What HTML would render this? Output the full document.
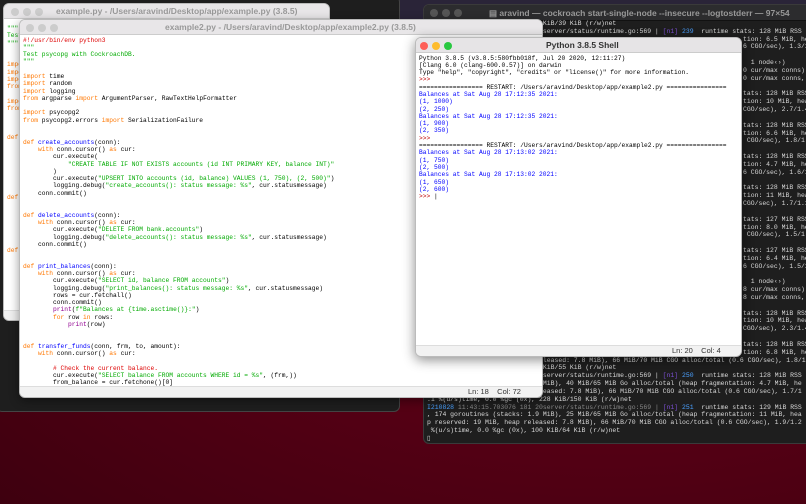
<!DOCTYPE html>
<html><head><meta charset="utf-8"><style>
*{margin:0;padding:0;box-sizing:border-box}
html,body{width:806px;height:504px;overflow:hidden}
body{position:relative;background:radial-gradient(ellipse at 75% 20%,#7c0420 0%,#5c0016 45%,#3e000f 100%);font-family:"Liberation Mono",monospace}
.abs{position:absolute}
.win{position:absolute;border-radius:6px;overflow:hidden}
.mono{font-family:"Liberation Mono",monospace}
.mono div{white-space:pre}
.k{color:#ff7700}.s{color:#00aa00}.f{color:#0000ff}.c{color:#dd0000}.b{color:#900090}
.tl{position:absolute;width:8px;height:8px;border-radius:50%}
.title{position:absolute;font-family:"Liberation Sans",sans-serif;font-size:8.5px;white-space:nowrap}
.code div{height:7.3px;line-height:7.3px}
.term div{height:7.84px;line-height:7.84px}
.term div.r{padding-left:316px}
</style></head><body>
<div class="abs" style="left:0;top:0;width:806px;height:30px;background:#2a2438"></div>
<div class="win" style="left:-4px;top:-4px;width:404px;height:416px;background:#1e1e1e;border:1px solid #444"></div>

<div class="win" style="left:423px;top:4px;width:390px;height:440px;background:#1e1e1e;border:1px solid #3a3a3a">
 <div class="abs" style="left:0;top:0;width:100%;height:16px;background:#2c2c2e;border-bottom:1px solid #111"></div>
 <div class="tl" style="left:6px;top:4px;background:#555"></div>
 <div class="tl" style="left:18px;top:4px;background:#555"></div>
 <div class="tl" style="left:30px;top:4px;background:#555"></div>
 <div class="title" style="left:65px;top:3px;color:#999;font-weight:bold">▤ aravind — cockroach start-single-node --insecure --logtostderr — 97×54</div>
</div>
<div class="abs mono term" style="left:427px;top:20px;font-size:6.45px;color:#d8d8d8"><div>                              KiB/39 KiB (r/w)net</div><div>                              server/status/runtime.go:569 | <span style="color:#7a4fd0">[n1]</span> <span style="color:#4aa0ff">239</span>  runtime stats: 128 MiB RSS</div><div class="r">tion: 6.5 MiB, he</div><div class="r">6 CGO/sec), 1.3/1</div><div> </div><div class="r">  1 node‹›)</div><div class="r">0 cur/max conns)</div><div class="r">0 cur/max conns,</div><div> </div><div class="r">tats: 128 MiB RSS</div><div class="r">tion: 10 MiB, hea</div><div class="r">CGO/sec), 2.7/1.4</div><div> </div><div class="r">tats: 128 MiB RSS</div><div class="r">tion: 6.6 MiB, he</div><div class="r"> CGO/sec), 1.8/1.</div><div> </div><div class="r">tats: 128 MiB RSS</div><div class="r">tion: 4.7 MiB, he</div><div class="r">6 CGO/sec), 1.6/1</div><div> </div><div class="r">tats: 128 MiB RSS</div><div class="r">tion: 11 MiB, hea</div><div class="r">CGO/sec), 1.7/1.1</div><div> </div><div class="r">tats: 127 MiB RSS</div><div class="r">tion: 8.0 MiB, he</div><div class="r"> CGO/sec), 1.5/1.</div><div> </div><div class="r">tats: 127 MiB RSS</div><div class="r">tion: 6.4 MiB, he</div><div class="r">6 CGO/sec), 1.5/1</div><div> </div><div class="r">  1 node‹›)</div><div class="r">8 cur/max conns)</div><div class="r">8 cur/max conns,</div><div> </div><div class="r">tats: 128 MiB RSS</div><div class="r">tion: 10 MiB, hea</div><div class="r">CGO/sec), 2.3/1.4</div><div> </div><div class="r">tats: 128 MiB RSS</div><div class="r">tion: 6.8 MiB, he</div><div>                              leased: 7.8 MiB), 66 MiB/70 MiB CGO alloc/total (0.6 CGO/sec), 1.8/1.</div><div>                              KiB/55 KiB (r/w)net</div><div>                              server/status/runtime.go:569 | <span style="color:#7a4fd0">[n1]</span> <span style="color:#4aa0ff">250</span>  runtime stats: 128 MiB RSS</div><div>                              MiB), 40 MiB/65 MiB Go alloc/total (heap fragmentation: 4.7 MiB, he</div><div>                              eased: 7.8 MiB), 66 MiB/70 MiB CGO alloc/total (0.6 CGO/sec), 1.7/1</div><div>.1 %(u/s)time, 0.0 %gc (0x), 228 KiB/150 KiB (r/w)net</div><div><span style="color:#4aa0ff">I210828</span> <span style="color:#888">11:43:15.703076 181 20server/status/runtime.go:569 |</span> <span style="color:#7a4fd0">[n1]</span> <span style="color:#4aa0ff">251</span>  runtime stats: 129 MiB RSS</div><div>, 174 goroutines (stacks: 1.9 MiB), 25 MiB/65 MiB Go alloc/total (heap fragmentation: 11 MiB, hea</div><div>p reserved: 19 MiB, heap released: 7.8 MiB), 66 MiB/70 MiB CGO alloc/total (0.6 CGO/sec), 1.9/1.2</div><div> %(u/s)time, 0.0 %gc (0x), 100 KiB/64 KiB (r/w)net</div><div>▯</div></div>

<div class="win" style="left:3px;top:3px;width:327px;height:318px;background:#fff;border:1px solid #bbb">
 <div class="abs" style="left:0;top:0;width:100%;height:15px;background:#e8e6e8;border-bottom:1px solid #ccc"></div>
 <div class="tl" style="left:7px;top:3.5px;background:#ccc"></div>
 <div class="tl" style="left:19px;top:3.5px;background:#ccc"></div>
 <div class="tl" style="left:31px;top:3.5px;background:#ccc"></div>
 <div class="title" style="left:52px;top:2px;color:#999;font-weight:bold">example.py - /Users/aravind/Desktop/app/example.py (3.8.5)</div>
 <div class="abs" style="left:0;bottom:0;width:100%;height:10px;background:#f0f0f0;border-top:1px solid #ddd"></div>
 <div class="abs mono code" style="left:3px;top:21px;font-size:6.25px"><div class="s">"""</div><div class="s">Test</div><div class="s">"""</div><div> </div><div> </div><div class="k">import</div><div class="k">import</div><div class="k">import</div><div class="k">from</div><div> </div><div class="k">import</div><div class="k">from</div><div> </div><div> </div><div> </div><div class="k">def</div></div>
 <div class="abs mono k" style="left:3px;top:190px;font-size:6.25px">def</div>
 <div class="abs mono k" style="left:3px;top:243px;font-size:6.25px">def</div>
</div>

<div class="win" style="left:19px;top:19px;width:524px;height:379px;background:#fff;border:1px solid #bbb;box-shadow:0 3px 10px rgba(0,0,0,.4)">
 <div class="abs" style="left:0;top:0;width:100%;height:15px;background:#e8e6e8;border-bottom:1px solid #ccc"></div>
 <div class="tl" style="left:6px;top:3.5px;background:#ccc"></div>
 <div class="tl" style="left:18px;top:3.5px;background:#ccc"></div>
 <div class="tl" style="left:30px;top:3.5px;background:#ccc"></div>
 <div class="title" style="left:145px;top:2px;color:#999;font-weight:bold">example2.py - /Users/aravind/Desktop/app/example2.py (3.8.5)</div>
 <div class="abs mono code" style="left:3px;top:16.5px;font-size:6.25px;color:#000"><div class="c">#!/usr/bin/env python3</div><div class="s">"""</div><div class="s">Test psycopg with CockroachDB.</div><div class="s">"""</div><div> </div><div><span class="k">import</span> time</div><div><span class="k">import</span> random</div><div><span class="k">import</span> logging</div><div><span class="k">from</span> argparse <span class="k">import</span> ArgumentParser, RawTextHelpFormatter</div><div> </div><div><span class="k">import</span> psycopg2</div><div><span class="k">from</span> psycopg2.errors <span class="k">import</span> SerializationFailure</div><div> </div><div> </div><div><span class="k">def</span> <span class="f">create_accounts</span>(conn):</div><div>    <span class="k">with</span> conn.cursor() <span class="k">as</span> cur:</div><div>        cur.execute(</div><div>            <span class="s">"CREATE TABLE IF NOT EXISTS accounts (id INT PRIMARY KEY, balance INT)"</span></div><div>        )</div><div>        cur.execute(<span class="s">"UPSERT INTO accounts (id, balance) VALUES (1, 750), (2, 500)"</span>)</div><div>        logging.debug(<span class="s">"create_accounts(): status message: %s"</span>, cur.statusmessage)</div><div>    conn.commit()</div><div> </div><div> </div><div><span class="k">def</span> <span class="f">delete_accounts</span>(conn):</div><div>    <span class="k">with</span> conn.cursor() <span class="k">as</span> cur:</div><div>        cur.execute(<span class="s">"DELETE FROM bank.accounts"</span>)</div><div>        logging.debug(<span class="s">"delete_accounts(): status message: %s"</span>, cur.statusmessage)</div><div>    conn.commit()</div><div> </div><div> </div><div><span class="k">def</span> <span class="f">print_balances</span>(conn):</div><div>    <span class="k">with</span> conn.cursor() <span class="k">as</span> cur:</div><div>        cur.execute(<span class="s">"SELECT id, balance FROM accounts"</span>)</div><div>        logging.debug(<span class="s">"print_balances(): status message: %s"</span>, cur.statusmessage)</div><div>        rows = cur.fetchall()</div><div>        conn.commit()</div><div>        <span class="b">print</span>(<span class="s">f"Balances at {time.asctime()}:"</span>)</div><div>        <span class="k">for</span> row <span class="k">in</span> rows:</div><div>            <span class="b">print</span>(row)</div><div> </div><div> </div><div><span class="k">def</span> <span class="f">transfer_funds</span>(conn, frm, to, amount):</div><div>    <span class="k">with</span> conn.cursor() <span class="k">as</span> cur:</div><div> </div><div>        <span class="c"># Check the current balance.</span></div><div>        cur.execute(<span class="s">"SELECT balance FROM accounts WHERE id = %s"</span>, (frm,))</div><div>        from_balance = cur.fetchone()[0]</div></div>
 <div class="abs" style="left:0;top:366px;width:100%;height:13px;background:#f2f2f2;border-top:1px solid #ddd"></div>
 <div class="title" style="left:448px;top:367px;color:#333;font-size:7.5px">Ln: 18&nbsp;&nbsp;&nbsp; Col: 72</div>
</div>

<div class="win" style="left:415px;top:37px;width:327px;height:320px;background:#fff;border:1px solid #bbb;box-shadow:0 3px 12px rgba(0,0,0,.45)">
 <div class="abs" style="left:0;top:0;width:100%;height:15px;background:#e6e4e6;border-bottom:1px solid #ccc"></div>
 <div class="tl" style="left:4px;top:3.5px;background:#fe5f57"></div>
 <div class="tl" style="left:16px;top:3.5px;background:#febc2e"></div>
 <div class="tl" style="left:28px;top:3.5px;background:#28c840"></div>
 <div class="title" style="left:130px;top:2px;color:#333;font-weight:bold">Python 3.8.5 Shell</div>
 <div class="abs mono code" style="left:3px;top:16.5px;font-size:6.25px;color:#000"><div>Python 3.8.5 (v3.8.5:580fbb018f, Jul 20 2020, 12:11:27)</div><div>[Clang 6.0 (clang-600.0.57)] on darwin</div><div>Type "help", "copyright", "credits" or "license()" for more information.</div><div style="color:#c00000">&gt;&gt;&gt;</div><div>================= RESTART: /Users/aravind/Desktop/app/example2.py ================</div><div class="f">Balances at Sat Aug 28 17:12:35 2021:</div><div class="f">(1, 1000)</div><div class="f">(2, 250)</div><div class="f">Balances at Sat Aug 28 17:12:35 2021:</div><div class="f">(1, 900)</div><div class="f">(2, 350)</div><div style="color:#c00000">&gt;&gt;&gt;</div><div>================= RESTART: /Users/aravind/Desktop/app/example2.py ================</div><div class="f">Balances at Sat Aug 28 17:13:02 2021:</div><div class="f">(1, 750)</div><div class="f">(2, 500)</div><div class="f">Balances at Sat Aug 28 17:13:02 2021:</div><div class="f">(1, 650)</div><div class="f">(2, 600)</div><div><span style="color:#c00000">&gt;&gt;&gt;</span> |</div></div>
 <div class="abs" style="left:0;top:307px;width:100%;height:13px;background:#f2f2f2;border-top:1px solid #ddd"></div>
 <div class="title" style="left:256px;top:308px;color:#333;font-size:7.5px">Ln: 20&nbsp;&nbsp;&nbsp; Col: 4</div>
</div>
</body></html>
